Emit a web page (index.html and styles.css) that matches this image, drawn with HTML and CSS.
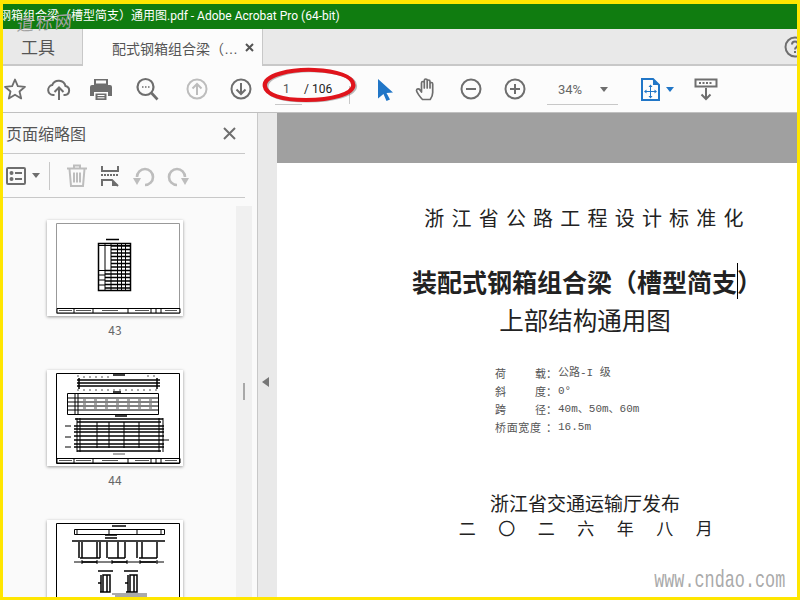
FILE: index.html
```html
<!DOCTYPE html>
<html lang="zh-CN">
<head>
  <meta charset="UTF-8" />
  <title>Adobe Acrobat Pro</title>
  <link rel="stylesheet" href="styles.css">
</head>
<body>
  <div class="frame">
    <!-- Title bar -->
    <div class="titlebar">
      <span class="title-text">钢箱组合梁（槽型简支）通用图.pdf - Adobe Acrobat Pro (64-bit)</span>
    </div>
    <div class="stamp">道标网</div>

    <!-- Tabs -->
    <div class="tabbar">
      <div class="tab-tools">工具</div>
      <div class="tab-doc">
        <span class="tab-name">配式钢箱组合梁（…</span>
        <svg class="tab-close" width="9" height="9" viewBox="0 0 9 9"><path d="M1 1l7 7M8 1l-7 7" stroke="#555" stroke-width="2"/></svg>
      </div>
      <svg class="help" width="22" height="22" viewBox="0 0 22 22"><circle cx="11" cy="11" r="9.500" fill="none" stroke="#6e6e6e" stroke-width="2"/><path d="M8 8.500c0-4 6-4 6 0 0 2.500-3 2.500-3 5M11 15v2" fill="none" stroke="#6e6e6e" stroke-width="2"/></svg>
    </div>

    <!-- Main toolbar -->
    <div class="toolbar">
      <svg class="tool" viewBox="0 0 24 24"><path d="M12 2.500l2.800 6.700 7.200.6-5.500 4.700 1.700 7-6.200-3.800-6.200 3.800 1.700-7L2 9.800l7.200-.6z" fill="none" stroke="#6e6e6e" stroke-width="1.800" stroke-linejoin="round"/></svg>
      <svg class="tool" viewBox="0 0 24 24"><path d="M7.500 18H6a5 5 0 0 1-.8-9.900 7 7 0 0 1 13.300 1A4.500 4.500 0 0 1 18 18h-1.500" fill="none" stroke="#6e6e6e" stroke-width="2"/><path d="M12 23V11M7.500 15l4.500-4.500 4.500 4.500" fill="none" stroke="#6e6e6e" stroke-width="2"/></svg>
      <svg class="tool tool-print" viewBox="0 0 24 24"><path d="M5 8V2h14v6z M3 8h18a2 2 0 0 1 2 2v9h-4v-4H5v4H1v-9a2 2 0 0 1 2-2z M6.500 16.500h11V23h-11z" fill="#6e6e6e"/><path d="M8.500 18.500h7M8.500 20.800h7" stroke="#fff" stroke-width="1"/><rect x="7" y="3.500" width="10" height="3" fill="#fcfcfc"/></svg>
      <svg class="tool tool-find" viewBox="0 0 24 24"><circle cx="10.500" cy="10" r="8" fill="none" stroke="#6e6e6e" stroke-width="2.200"/><path d="M16.500 16l6 6.500" stroke="#6e6e6e" stroke-width="2.600"/><path d="M7 10h1.500M10 10h1.500M13 10h1.500" stroke="#6e6e6e" stroke-width="1.600"/></svg>
      <svg class="tool tool-nav" viewBox="0 0 24 24"><circle cx="12" cy="12" r="9.500" fill="none" stroke="#bdbdbd" stroke-width="2"/><path d="M12 18V7M7.500 11.500L12 7l4.500 4.500" fill="none" stroke="#bdbdbd" stroke-width="2"/></svg>
      <svg class="tool" viewBox="0 0 24 24"><circle cx="12" cy="12" r="9.500" fill="none" stroke="#6e6e6e" stroke-width="2"/><path d="M12 6v11M7.500 12.500L12 17l4.500-4.500" fill="none" stroke="#6e6e6e" stroke-width="2"/></svg>

      <div class="page-box">
        <span class="page-current">1</span>
        <span class="page-total">/ 106</span>
        <span class="page-tick"></span>
        <svg class="page-ring" width="108" height="42" viewBox="0 0 100 42" preserveAspectRatio="none">
          <path class="ring-shadow" d="M12 22C10 10 36 4 58 5c20 1 36 6 36 15 0 9-20 15-44 15C28 35 13 31 12 22z"/>
          <path class="ring-line" d="M10 20C9 9 34 3 56 4c20 1 36 6 36 15 0 9-20 15-44 15C26 34 11 29 10 20z"/>
        </svg>
      </div>

      <svg class="tool" viewBox="0 0 24 24"><path d="M6 2l15 13.500-6.500.5 3.500 6.500-3.500 1.500-3-7-5.500 4.500z" fill="#2176c7"/></svg>
      <svg class="tool tool-hand" viewBox="0 0 24 24"><path d="M7.500 22.500C5 20 1.500 15 1.500 13.500c0-2 2.500-2 3.500-.5l1.500 2V6c0-2 2.800-2 2.800 0v5-7.500c0-2 2.900-2 2.900 0V11 4.500c0-2 2.800-2 2.800 0V11 7c0-2 2.700-2 2.700 0v8.500c0 3-1 5-2.500 7z" fill="none" stroke="#6e6e6e" stroke-width="1.700" stroke-linejoin="round"/></svg>
      <svg class="tool" viewBox="0 0 24 24"><circle cx="12" cy="12" r="9.500" fill="none" stroke="#6e6e6e" stroke-width="2"/><path d="M7 12h10" stroke="#6e6e6e" stroke-width="2"/></svg>
      <svg class="tool" viewBox="0 0 24 24"><circle cx="12" cy="12" r="9.500" fill="none" stroke="#6e6e6e" stroke-width="2"/><path d="M7 12h10M12 7v10" stroke="#6e6e6e" stroke-width="2"/></svg>

      <div class="zoom-box">
        <span class="zoom-value">34%</span>
        <span class="caret-down"></span>
      </div>

      <div class="fit-group">
        <svg class="tool" viewBox="0 0 24 24"><path d="M4 2h11l6 6v15H4z" fill="none" stroke="#2176c7" stroke-width="2"/><path d="M15 2l6 6h-6z" fill="#2176c7"/><path d="M12.500 8.500v12M7 14.500h11" stroke="#2176c7" stroke-width="1"/><path d="M12.500 7.500l-2 2.500h4zM12.500 21.500l-2-2.500h4zM6 14.500l2.500-2v4zM19 14.500l-2.500-2v4z" fill="#2176c7"/></svg>
        <span class="caret-down caret-blue"></span>
      </div>

      <svg class="tool" viewBox="0 0 24 24"><path d="M1.500 2.500h21v7h-21z" fill="none" stroke="#6e6e6e" stroke-width="2"/><path d="M5 6h14" stroke="#6e6e6e" stroke-width="2" stroke-dasharray="2 1.500"/><path d="M12 11v11M7.500 17.500L12 22l4.500-4.500" fill="none" stroke="#6e6e6e" stroke-width="2"/></svg>
    </div>

    <div class="workspace">
      <!-- Thumbnails panel -->
      <aside class="panel">
        <div class="panel-head">
          <span class="panel-title">页面缩略图</span>
          <svg width="13" height="13" viewBox="0 0 13 13"><path d="M1 1l11 11M12 1L1 12" stroke="#6e6e6e" stroke-width="2"/></svg>
        </div>
        <div class="panel-tools">
          <svg width="20" height="18" viewBox="0 0 20 18"><rect x="1" y="1" width="18" height="16" rx="1" fill="none" stroke="#6e6e6e" stroke-width="2"/><circle cx="5.500" cy="6" r="2" fill="#6e6e6e"/><circle cx="5.500" cy="12" r="2" fill="#6e6e6e"/><path d="M9 6h7M9 12h7" stroke="#6e6e6e" stroke-width="2"/></svg>
          <span class="caret-down caret-small"></span>
          <span class="panel-divider"></span>
          <svg class="ptool-trash" width="22" height="23" viewBox="0 0 22 23"><path d="M1 4.500h20M8 4V1.500h6V4M3.500 5l1.500 17h12l1.500-17M8 8.500v10M11 8.500v10M14 8.500v10" fill="none" stroke="#bdbdbd" stroke-width="2"/></svg>
          <svg class="ptool-extract" width="18" height="22" viewBox="0 0 18 22"><path d="M1 1v5h16V1M1 21v-6h10l6 6" fill="none" stroke="#6e6e6e" stroke-width="2"/><path d="M0 10h18" stroke="#6e6e6e" stroke-width="2" stroke-dasharray="2 1"/><path d="M11 15v6h6z" fill="#6e6e6e"/></svg>
          <svg class="ptool-left" width="22" height="22" viewBox="0 0 22 22"><path d="M12 20a8 8 0 1 0-8-8" fill="none" stroke="#bdbdbd" stroke-width="2.600"/><path d="M0 13h8l-4 7z" fill="#bdbdbd"/></svg>
          <svg class="ptool-right" width="22" height="22" viewBox="0 0 22 22"><path d="M10 20a8 8 0 1 1 8-8" fill="none" stroke="#bdbdbd" stroke-width="2.600"/><path d="M14 13h8l-4 7z" fill="#bdbdbd"/></svg>
        </div>
        <div class="thumbs">
          <div class="thumb-list">
            <div class="thumb">
              <svg class="thumb-sheet" width="136" height="96" viewBox="0 0 136 96">
                <path class="sheet-light" d="M9.500 3.500h123v90h-123z"/>
                <path class="ink-thick" d="M51.500 23.500h32v47h-32zM64 26h20M64 29.500h20M64 33h20M64 36.500h20M64 40h20M64 43.500h20M64 47h20M58 50.500h26M58 54h26M58 57.500h26M58 61h26M58 64.500h26M58 68h26M59 19.500h13"/>
                <path class="ink" d="M51 25.500h33M58 23v47M64 23v47M70.500 23v47M74.500 23v47M78.500 23v47M51 50.500h7M51 55h7M51 60h7M51 65h7"/>
                <path class="ink" d="M10 88.500h123v4.500H10z M27 88v5M46 88v5M81 88v5M104 88v5M109 88v5M114 88v5"/>
                <path class="ink-dim" d="M12 90.500h13M29 90.500h15M55 90.500h16M88 90.500h14M118 90.500h12"/>
              </svg>
            </div>
            <span class="thumb-label">43</span>
            <div class="thumb">
              <svg class="thumb-sheet" width="136" height="96" viewBox="0 0 136 96">
                <path class="ink" d="M9.500 3.500h123v90h-123z"/>
                <path class="ink-thick" d="M66 5h12M30 10h83M30 13h83M30 16h83M32 8v11M110 8v11M66 22h8M68 46h12"/>
                <path class="ink-dim" d="M30 6h4M100 6h8M36 7h30M30 20h83" stroke-dasharray="2 4"/>
                <path class="ink" d="M20.500 23.500h91v21h-91zM20 28h92M20 32h92M20 36h92M20 40h92M28 23v21M31 23v21"/>
                <path class="ink-dim" d="M36 30h70M36 34h70M36 38h70" stroke-dasharray="3 8"/>
                <path class="ink-thick" d="M28 49h88M30 52h84M27 56h90M27 59h90M27 62h90M27 66h90M27 70h90M27 74h90M27 77h90M30 81h84"/>
                <path class="ink" d="M30 48v34M33 48v34M50 52v26M62 52v26M77 52v26M92 52v26M112 48v34M116 48v34M18 56h6M18 67h6M18 77h6M117 70h5" stroke-width="2"/>
                <path class="ink-dim" d="M66 84h12"/>
                <path class="ink" d="M10 88.500h123v4.500H10z M27 88v5M46 88v5M81 88v5M104 88v5M109 88v5M114 88v5"/>
                <path class="ink-dim" d="M12 90.500h13M29 90.500h15M55 90.500h16M88 90.500h14M118 90.500h12"/>
              </svg>
            </div>
            <span class="thumb-label">44</span>
            <div class="thumb">
              <svg class="thumb-sheet" width="136" height="96" viewBox="0 0 136 96">
                <path class="ink" d="M9.500 3.500h123v90h-123z"/>
                <path class="ink" d="M27.500 9.500h90v5h-90zM30 9v6M62 9v6M90 9v6M114 9v6"/>
                <path class="ink-thick" d="M65 6h14M25 21h93M58 15h12M58 18h12"/>
                <path class="ink-thick" d="M32 22v16M35 22v16M50 22v16M53 22v16M60 22v16M71 22v16M78 22v16M90 22v16M95 22v16M110 22v16M33 38h20M61 38h17M92 38h18"/>
                <path class="ink" d="M27 42h90M35 40v4M50 40v4M65 40v4M80 40v4M93 40v4M110 40v4"/>
                <path class="ink-thick" d="M35 42h15M65 42h15M93 42h16M51 51h15M77 51h14"/>
                <path class="ink-thick" d="M54 55v17M56 55h7v17h-7zM60 55v17M81 55v17M83 55h7v17h-7zM87 55v17M51 63h3M78 63h3M53 72h10M79 72h10"/>
                <path class="ink-dim" d="M65 74h35M68 76h32"/>
              </svg>
            </div>
          </div>
          <div class="thumb-track"><span class="thumb-grip"></span></div>
        </div>
      </aside>

      <div class="collapse-strip"><span class="collapse-arrow"></span></div>

      <!-- Document view -->
      <main class="viewer">
        <div class="viewer-gap"></div>
        <article class="page">
          <div class="doc-series">浙江省公路工程设计标准化</div>
          <h1 class="doc-title">装配式钢箱组合梁（槽型简<span class="doc-caret">支</span>）</h1>
          <h2 class="doc-subtitle">上部结构通用图</h2>
          <div class="spec">
            <div class="spec-row"><span class="spec-label"><span>荷</span><span>载</span></span><span class="spec-colon">：</span><span>公路-I 级</span></div>
            <div class="spec-row"><span class="spec-label"><span>斜</span><span>度</span></span><span class="spec-colon">：</span><span>0°</span></div>
            <div class="spec-row"><span class="spec-label"><span>跨</span><span>径</span></span><span class="spec-colon">：</span><span>40m、50m、60m</span></div>
            <div class="spec-row"><span class="spec-label spec-label-wide"><span>桥</span><span>面</span><span>宽</span><span>度</span></span><span class="spec-colon">：</span><span>16.5m</span></div>
          </div>
          <div class="doc-publisher">浙江省交通运输厅发布</div>
          <div class="doc-date">二〇二六年八月</div>
        </article>
        <div class="site-mark">www.cndao.com</div>
      </main>
    </div>
  </div>
</body>
</html>
```

FILE: styles.css
```css
* {
  margin: 0;
  padding: 0;
  box-sizing: border-box;
}

body {
  width: 800px;
  height: 600px;
  overflow: hidden;
  font-family: "Noto Sans CJK SC", "Liberation Sans", sans-serif;
}

.frame {
  position: relative;
  width: 800px;
  height: 600px;
  border: solid #ffe600;
  border-width: 4px 3px 3px 3px;
  display: flex;
  flex-direction: column;
  overflow: hidden;
  background: #fcfcfc;
}

/* title bar */
.titlebar {
  height: 25px;
  background: #107c10;
  color: #fff;
  font-family: Roboto, "Noto Sans CJK SC", sans-serif;
  font-size: 12px;
  line-height: 24px;
  white-space: nowrap;
  overflow: hidden;
}

.title-text {
  display: block;
  margin-left: -4px;
}

.stamp {
  position: absolute;
  left: 14px;
  top: 7px;
  font-size: 17px;
  line-height: 22px;
  letter-spacing: 2px;
  color: #a2a2a2;
  transform: rotate(-4deg) skewX(-8deg);
  pointer-events: none;
  z-index: 2;
}

/* tabs */
.tabbar {
  height: 37px;
  display: flex;
  background: #e9e9e9;
  border-bottom: 2px solid #c8c8c8;
  position: relative;
}

.tab-tools {
  width: 80px;
  text-align: center;
  font-size: 17px;
  line-height: 35px;
  color: #555;
  border-right: 1px solid #c8c8c8;
  padding-right: 9px;
}

.tab-doc {
  width: 180px;
  height: 37px;
  background: #fcfcfc;
  border-right: 1px solid #c8c8c8;
  display: flex;
  align-items: center;
  padding-left: 29px;
  z-index: 1;
}

.tab-name {
  font-family: "Liberation Sans", "Noto Sans CJK SC", sans-serif;
  font-size: 14px;
  color: #555;
  width: 133px;
  white-space: nowrap;
}

.help {
  position: absolute;
  right: -9px;
  top: 7px;
}

/* main toolbar */
.toolbar {
  height: 47px;
  background: #fcfcfc;
  display: flex;
  align-items: center;
  gap: 20px;
  border-bottom: 1px solid #c0c0c0;
  flex-shrink: 0;
}

.tool {
  width: 24px;
  height: 24px;
  flex-shrink: 0;
}

.tool-print {
  margin-left: -2px;
}

.tool-find {
  margin-left: 2px;
}

.tool-nav {
  margin-left: 6px;
}

.tool-hand {
  margin-left: -1px;
}

.page-box {
  position: relative;
  width: 77px;
  height: 30px;
  margin-left: 2px;
  font-family: Roboto, sans-serif;
  font-size: 12px;
  line-height: 30px;
  color: #555;
  flex-shrink: 0;
}

.page-current {
  position: absolute;
  left: 8px;
  top: 0;
}

.page-total {
  position: absolute;
  left: 29px;
  top: 0;
  color: #222;
}

.page-box::after {
  content: "";
  position: absolute;
  left: 0;
  bottom: -1px;
  width: 27px;
  border-bottom: 1px solid #c8c8c8;
}

.page-tick {
  position: absolute;
  right: 2px;
  top: 12px;
  height: 18px;
  border-right: 1px solid #c8c8c8;
}

.page-ring {
  position: absolute;
  left: -21px;
  top: -8px;
  overflow: visible;
}

.ring-line {
  fill: none;
  stroke: #e0141c;
  stroke-width: 4;
}

.ring-shadow {
  fill: none;
  stroke: rgba(60, 60, 60, 0.35);
  stroke-width: 3;
}

.zoom-box {
  width: 71px;
  height: 30px;
  display: flex;
  align-items: center;
  justify-content: space-between;
  padding: 0 10px 0 11px;
  border-bottom: 1px solid #c8c8c8;
  font-family: Roboto, sans-serif;
  font-size: 13px;
  color: #666;
  flex-shrink: 0;
  margin-top: 2px;
}

.caret-down {
  width: 0;
  height: 0;
  border: solid transparent;
  border-width: 5px 4px 0 4px;
  border-top-color: #6e6e6e;
  flex-shrink: 0;
}

.caret-blue {
  border-top-color: #2176c7;
}

.fit-group {
  width: 36px;
  display: flex;
  align-items: center;
  justify-content: space-between;
  flex-shrink: 0;
}

/* workspace */
.workspace {
  flex: 1;
  min-height: 0;
  display: flex;
}

.panel {
  width: 255px;
  background: #fafafa;
  border-right: 1px solid #c8c8c8;
  display: flex;
  flex-direction: column;
  flex-shrink: 0;
}

.panel-head {
  width: 242px;
  height: 41px;
  display: flex;
  align-items: center;
  justify-content: space-between;
  padding: 0 9px 0 3px;
  border-bottom: 1px solid #c8c8c8;
  flex-shrink: 0;
}

.panel-title {
  font-size: 16px;
  color: #555;
}

.panel-tools {
  width: 242px;
  height: 44px;
  display: flex;
  align-items: center;
  padding-left: 3px;
  border-bottom: 1px solid #c8c8c8;
  flex-shrink: 0;
}

.caret-small {
  margin-left: 6px;
}

.panel-divider {
  height: 28px;
  margin-left: 9px;
  border-left: 1px solid #c8c8c8;
}

.ptool-trash {
  margin-left: 16px;
}

.ptool-extract {
  margin-left: 13px;
}

.ptool-left {
  margin-left: 14px;
}

.ptool-right {
  margin-left: 12px;
}

.thumbs {
  flex: 1;
  min-height: 0;
  display: flex;
  padding-top: 8px;
  overflow: hidden;
}

.thumb-list {
  width: 233px;
  display: flex;
  flex-direction: column;
  align-items: center;
  padding: 14px 9px 0 0;
}

.thumb {
  width: 136px;
  height: 96px;
  flex-shrink: 0;
  background: #fff;
  box-shadow: 0 1px 3px rgba(0, 0, 0, 0.4);
}

.thumb-sheet {
  display: block;
}

.ink {
  fill: none;
  stroke: #000;
  stroke-width: 1;
}

.ink-thick {
  fill: none;
  stroke: #000;
  stroke-width: 1.500;
}

.ink-dim {
  fill: none;
  stroke: #555;
  stroke-width: 1;
}

.sheet-light {
  fill: none;
  stroke: #999;
  stroke-width: 1;
}

.thumb-label {
  height: 54px;
  flex-shrink: 0;
  padding-top: 6px;
  font-size: 12px;
  line-height: 16px;
  color: #666;
}

.thumb-track {
  width: 16px;
  background: #f0f0f0;
  display: flex;
  justify-content: center;
  align-items: flex-start;
  padding-top: 177px;
}

.thumb-grip {
  width: 2px;
  height: 17px;
  background: #a8a8a8;
}

.collapse-strip {
  width: 19px;
  background: #e9e9e9;
  display: flex;
  align-items: center;
  justify-content: center;
  flex-shrink: 0;
  padding: 54px 4px 0 0;
}

.collapse-arrow {
  width: 0;
  height: 0;
  border: solid transparent;
  border-width: 5px 7px 5px 0;
  border-right-color: #777;
}

/* document */
.viewer {
  position: relative;
  flex: 1;
  min-width: 0;
  overflow: hidden;
  background: #fff;
  display: flex;
  flex-direction: column;
}

.viewer-gap {
  height: 50px;
  background: #a0a0a0;
  flex-shrink: 0;
}

.page {
  width: 616px;
  flex: 1;
  display: flex;
  flex-direction: column;
  align-items: center;
  padding-top: 40px;
  color: #222;
}

.doc-series {
  font-size: 20px;
  line-height: 30px;
  letter-spacing: 7.200px;
  margin-left: 5px;
  white-space: nowrap;
}

.doc-title {
  font-size: 25px;
  line-height: 30px;
  font-weight: 700;
  margin-top: 33px;
  margin-left: 4px;
  white-space: nowrap;
}

.doc-caret {
  border-right: 1px solid #000;
  margin-right: -1px;
}

.doc-subtitle {
  font-size: 24.500px;
  line-height: 30px;
  font-weight: 400;
  margin-top: 9px;
  white-space: nowrap;
}

.spec {
  align-self: flex-start;
  margin: 29px 0 0 218px;
  font-family: "Liberation Mono", "Noto Sans CJK SC", monospace;
  font-size: 11px;
  line-height: 18px;
  color: #555;
}

.spec-row {
  display: flex;
}

.spec-label {
  width: 51px;
  display: flex;
  justify-content: space-between;
  font-family: "Noto Sans CJK SC", sans-serif;
}

.spec-label-wide {
  width: 46px;
  margin-right: 5px;
}

.spec-colon {
  width: 12px;
  font-family: "Noto Sans CJK SC", sans-serif;
}

.doc-publisher {
  font-size: 19px;
  line-height: 24px;
  margin-top: 55px;
  white-space: nowrap;
}

.doc-date {
  font-size: 17px;
  line-height: 24px;
  letter-spacing: 22.500px;
  margin-top: 1px;
  margin-left: 24px;
  white-space: nowrap;
}

.site-mark {
  position: absolute;
  right: 12px;
  bottom: 3px;
  font-family: "Liberation Mono", monospace;
  font-size: 24px;
  line-height: 26px;
  color: #aaa;
  transform: scaleX(0.7);
  transform-origin: right center;
  white-space: nowrap;
}
```
